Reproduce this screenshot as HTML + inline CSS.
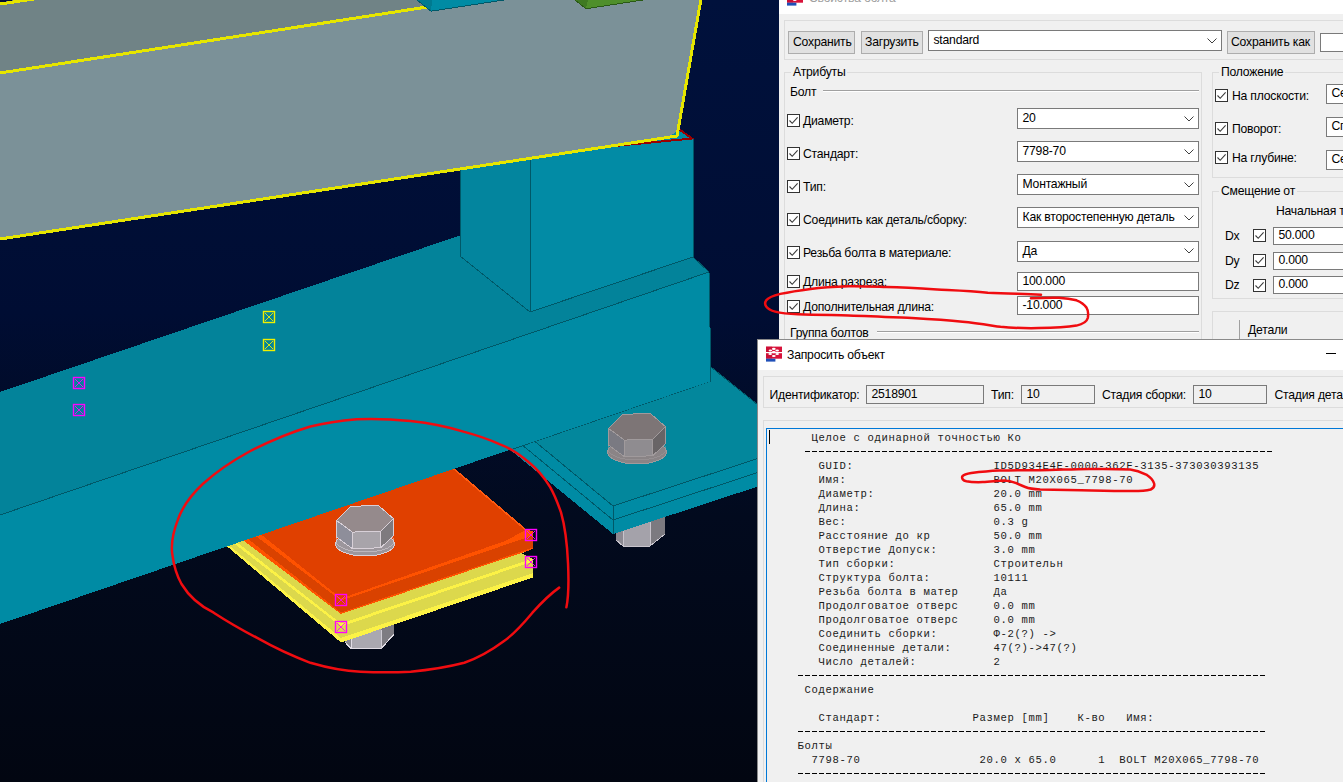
<!DOCTYPE html>
<html><head><meta charset="utf-8">
<style>
*{box-sizing:border-box}
html,body{margin:0;padding:0;width:1343px;height:782px;overflow:hidden;background:#000a26;font-family:"Liberation Sans",sans-serif;font-size:12.2px;letter-spacing:-0.22px;color:#000}
#scene{position:absolute;left:0;top:0}
.abs{position:absolute}
.txt{position:absolute;white-space:pre;line-height:14px}
.gb{position:absolute;border:1px solid #dcdcdc}
.btn{position:absolute;background:#e1e1e1;border:1px solid #adadad}
.cmb{position:absolute;background:#fff;border:1px solid #7a7a7a}
.ed{position:absolute;background:#fff;border:1px solid #7a7a7a}
.cb{position:absolute;width:13px;height:13px;border:1px solid #333;background:#fff}
#ann{position:absolute;left:0;top:0}
.mono{position:absolute;font-family:"Liberation Mono",monospace;font-size:10.6px;letter-spacing:0.64px;line-height:14px;white-space:pre;color:#1a1a1a}
</style></head><body>
<svg id="scene" width="1343" height="782" viewBox="0 0 1343 782" shape-rendering="crispEdges">
<defs><linearGradient id="bg" x1="0" y1="0" x2="0" y2="1">
<stop offset="0" stop-color="#00113c"/><stop offset="0.4" stop-color="#000d33"/><stop offset="0.66" stop-color="#020a1e"/><stop offset="1" stop-color="#020611"/>
</linearGradient></defs>
<rect width="1343" height="782" fill="url(#bg)"/>
<polygon points="345.0,615.0 351.0,615.0 351.0,648.5 345.0,642.0" fill="#8c8a92" />
<polygon points="351.0,615.0 381.0,615.0 381.0,648.5 351.0,648.5" fill="#aaa8b0" />
<polygon points="381.0,615.0 394.0,615.0 394.0,634.5 381.0,648.5" fill="#7e7c82" />
<polyline points="345.0,642.0 351.0,648.5 381.0,648.5 394.0,634.5" fill="none" stroke="#e0dce4" stroke-width="1.2" />
<polyline points="351.0,630.0 351.0,648.5" fill="none" stroke="#e0dce4" stroke-width="1" />
<polyline points="381.0,630.0 381.0,648.5" fill="none" stroke="#d0ccd4" stroke-width="1" />
<polygon points="224.2,544.0 341.0,642.5 533.0,577.5 533.0,531.0 526.0,530.0 448.2,464.0" fill="#fcf246" />
<polygon points="226.5,543.2 341.0,638.0 533.0,573.0 533.0,531.0 526.0,530.0 448.2,464.0" fill="#dcd84c" />
<polygon points="231.5,541.5 341.0,626.5 533.0,561.5 533.0,531.0 526.0,530.0 448.2,464.0" fill="#fcf246" />
<polygon points="234.6,540.5 341.0,623.5 533.0,558.5 533.0,531.0 526.0,530.0 448.2,464.0" fill="#dcd84c" />
<polygon points="240.7,538.4 341.0,614.0 533.0,549.0 533.0,531.0 526.0,530.0 448.2,464.0" fill="#ff5200" />
<polygon points="245.4,536.8 341.0,612.5 533.0,547.5 533.0,531.0 526.0,530.0 448.2,464.0" fill="#d94200" />
<polygon points="253.3,534.1 341.0,600.5 533.0,535.5 533.0,531.0 526.0,530.0 448.2,464.0" fill="#ff5200" />
<polygon points="258.5,532.4 341.0,598.5 505.0,541.0 526.0,530.0 448.2,464.0" fill="#e04000" />
<polyline points="526.0,530.0 453.4,468.4" fill="none" stroke="#ff5a10" stroke-width="1.6" />
<polygon points="522.0,553.5 534.0,548.0 534.0,559.5" fill="#020a1c" />
<polygon points="616.0,500.0 623.0,500.0 623.0,546.0 616.0,540.0" fill="#8c8a92" />
<polygon points="623.0,500.0 650.0,500.0 650.0,546.0 623.0,546.0" fill="#a4a2aa" />
<polygon points="650.0,500.0 665.0,500.0 665.0,534.0 650.0,546.0" fill="#7c7a80" />
<polyline points="616.0,540.0 623.0,546.0 650.0,546.0 665.0,534.0" fill="none" stroke="#c8c4cc" stroke-width="1" />
<polyline points="623.0,520.0 623.0,546.0" fill="none" stroke="#c8c4cc" stroke-width="1" />
<polyline points="650.0,520.0 650.0,546.0" fill="none" stroke="#c8c4cc" stroke-width="1" />
<polygon points="510.3,449.9 613.0,534.0 613.0,520.0 522.6,445.3" fill="#008ba4" />
<polygon points="522.6,445.3 613.0,520.0 613.0,506.0 535.0,441.5" fill="#008ba4" />
<polygon points="535.0,441.5 613.0,506.0 760.0,457.8 760.0,406.5 711.0,367.0 711.0,381.0" fill="#03879c" />
<polygon points="613.0,506.0 760.0,457.8 760.0,471.8 613.0,520.0" fill="#008ba4" />
<polygon points="613.0,520.0 760.0,471.8 760.0,485.8 613.0,534.0" fill="#008ba4" />
<polyline points="510.3,449.9 711.0,381.0" fill="none" stroke="#005868" stroke-width="1" />
<polyline points="522.6,445.3 613.0,520.0 760.0,471.8" fill="none" stroke="#005868" stroke-width="1" />
<polyline points="535.0,441.5 613.0,506.0 760.0,457.8" fill="none" stroke="#005868" stroke-width="1" />
<polyline points="613.0,506.0 613.0,534.0" fill="none" stroke="#005868" stroke-width="1" />
<polyline points="711.0,367.0 760.0,406.5" fill="none" stroke="#005868" stroke-width="1" />
<polygon points="0.0,392.0 614.0,183.0 709.0,272.0 0.0,515.0" fill="#03839a" />
<polygon points="0.0,515.0 709.0,272.0 711.0,381.0 0.0,624.0" fill="#008ba4" />
<polyline points="0.0,515.0 709.0,272.0" fill="none" stroke="#005868" stroke-width="1" />
<polyline points="693.0,257.0 709.0,272.0 711.0,381.0" fill="none" stroke="#005868" stroke-width="1" />
<polygon points="460.0,150.0 530.0,140.0 530.0,312.0 460.0,256.0" fill="#03859e" />
<polyline points="460.0,165.0 460.0,256.0" fill="none" stroke="#005868" stroke-width="1" />
<polygon points="530.0,140.0 679.4,120.0 679.4,129.5 693.0,138.5 693.0,257.0 530.0,312.0" fill="#028ba5" />
<polyline points="460.0,256.0 530.0,312.0 693.0,257.0" fill="none" stroke="#005868" stroke-width="1" />
<polyline points="530.0,150.0 530.0,312.0" fill="none" stroke="#005868" stroke-width="1" />
<polyline points="693.0,138.0 693.0,257.0" fill="none" stroke="#005868" stroke-width="1" />
<polygon points="0.0,0.0 480.0,0.0 427.0,7.0 0.0,73.0" fill="#708386" />
<polygon points="0.0,2.5 15.0,0.0 0.0,0.0" fill="#000c32" />
<polyline points="0.0,4.0 34.0,-1.0" fill="none" stroke="#e6e600" stroke-width="3" />
<polygon points="0.0,73.0 427.0,7.0 432.0,-1.0 701.0,-1.0 677.0,136.0 0.0,239.0" fill="#7b9198" />
<polygon points="679.4,130.0 691.6,138.5 660.0,142.0" fill="#008ba4" />
<polyline points="610.0,146.5 692.0,138.5 679.4,129.5" fill="none" stroke="#9a0000" stroke-width="2" />
<polyline points="0.0,73.0 427.0,7.0" fill="none" stroke="#e6e600" stroke-width="3" />
<polyline points="0.0,239.0 677.0,136.0 701.0,-1.0" fill="none" stroke="#e6e600" stroke-width="3" />
<polygon points="417.0,0.0 431.0,11.2 504.0,0.0" fill="#008ba4" />
<polygon points="417.0,0.0 431.0,11.2 432.0,0.0" fill="#007a90" />
<polyline points="417.0,0.0 431.0,11.2 504.0,0.0" fill="none" stroke="#005868" stroke-width="1" />
<polygon points="575.0,0.0 586.0,8.7 643.0,0.0" fill="#4f8f2b" />
<polygon points="575.0,0.0 586.0,8.7 588.0,0.0" fill="#3f7a22" />
<polyline points="575.0,0.0 586.0,8.7 643.0,0.0" fill="none" stroke="#2a5a15" stroke-width="1" />
<ellipse cx="637.0" cy="452.0" rx="29.5" ry="12.0" fill="#8a8486" stroke="#a09a9c" stroke-width="1"/>
<ellipse cx="637.0" cy="449.0" rx="29.0" ry="11.0" fill="none" stroke="#a09a9c" stroke-width="0.8" opacity="0.7"/>
<polygon points="608.6,428.5 624.3,440.1 624.3,456.7 608.6,445.0" fill="#7a7a82" />
<polygon points="624.3,440.1 652.9,439.2 652.9,455.8 624.3,456.7" fill="#8f8c90" />
<polygon points="652.9,439.2 665.5,426.7 665.5,443.3 652.9,455.8" fill="#686466" />
<polygon points="622.5,414.2 650.7,413.7 665.5,426.7 652.9,439.2 624.3,440.1 608.6,428.5" fill="#7d7576" stroke="#a09a9c" stroke-width="1"/>
<polyline points="608.6,428.5 608.6,445.0 624.3,456.7 652.9,455.8 665.5,443.3 665.5,426.7" fill="none" stroke="#a09a9c" stroke-width="1" />
<polyline points="624.3,440.1 624.3,456.7" fill="none" stroke="#a09a9c" stroke-width="1" />
<polyline points="652.9,439.2 652.9,455.8" fill="none" stroke="#a09a9c" stroke-width="1" />
<ellipse cx="365.0" cy="544.0" rx="29.5" ry="12.0" fill="#9c969c" stroke="#d8d0d8" stroke-width="1"/>
<ellipse cx="365.0" cy="541.0" rx="29.0" ry="11.0" fill="none" stroke="#d8d0d8" stroke-width="0.8" opacity="0.7"/>
<polygon points="336.6,520.5 352.3,532.1 352.3,548.7 336.6,537.0" fill="#8e8e9a" />
<polygon points="352.3,532.1 380.9,531.2 380.9,547.8 352.3,548.7" fill="#a8a4aa" />
<polygon points="380.9,531.2 393.5,518.7 393.5,535.3 380.9,547.8" fill="#7e7a7e" />
<polygon points="350.5,506.2 378.7,505.7 393.5,518.7 380.9,531.2 352.3,532.1 336.6,520.5" fill="#958a8c" stroke="#d8d0d8" stroke-width="1"/>
<polyline points="336.6,520.5 336.6,537.0 352.3,548.7 380.9,547.8 393.5,535.3 393.5,518.7" fill="none" stroke="#d8d0d8" stroke-width="1" />
<polyline points="352.3,532.1 352.3,548.7" fill="none" stroke="#d8d0d8" stroke-width="1" />
<polyline points="380.9,531.2 380.9,547.8" fill="none" stroke="#d8d0d8" stroke-width="1" />
<g stroke="#f0f000" fill="none" shape-rendering="auto"><rect x="263.5" y="311.5" width="11" height="11" stroke-width="1.4"/><path d="M265.0,313.0L273.0,321.0M273.0,313.0L265.0,321.0" stroke-width="0.9"/></g>
<g stroke="#f0f000" fill="none" shape-rendering="auto"><rect x="263.5" y="339.5" width="11" height="11" stroke-width="1.4"/><path d="M265.0,341.0L273.0,349.0M273.0,341.0L265.0,349.0" stroke-width="0.9"/></g>
<g stroke="#ff00ff" fill="none" shape-rendering="auto"><rect x="73.5" y="377.5" width="11" height="11" stroke-width="1.4"/><path d="M75.0,379.0L83.0,387.0M83.0,379.0L75.0,387.0" stroke-width="0.9"/></g>
<g stroke="#ff00ff" fill="none" shape-rendering="auto"><rect x="73.5" y="404.5" width="11" height="11" stroke-width="1.4"/><path d="M75.0,406.0L83.0,414.0M83.0,406.0L75.0,414.0" stroke-width="0.9"/></g>
<g stroke="#ff00ff" fill="none" shape-rendering="auto"><rect x="335.5" y="594.5" width="11" height="11" stroke-width="1.4"/><path d="M337.0,596.0L345.0,604.0M345.0,596.0L337.0,604.0" stroke-width="0.9"/></g>
<g stroke="#ff00ff" fill="none" shape-rendering="auto"><rect x="335.5" y="621.5" width="11" height="11" stroke-width="1.4"/><path d="M337.0,623.0L345.0,631.0M345.0,623.0L337.0,631.0" stroke-width="0.9"/></g>
<g stroke="#ff00ff" fill="none" shape-rendering="auto"><rect x="525.5" y="529.5" width="11" height="11" stroke-width="1.4"/><path d="M527.0,531.0L535.0,539.0M535.0,531.0L527.0,539.0" stroke-width="0.9"/></g>
<g stroke="#ff00ff" fill="none" shape-rendering="auto"><rect x="525.5" y="556.5" width="11" height="11" stroke-width="1.4"/><path d="M527.0,558.0L535.0,566.0M535.0,558.0L527.0,566.0" stroke-width="0.9"/></g>
</svg>
<div class="abs" style="left:779px;top:0px;width:600px;height:14px;background:#fff"></div><div class="abs" style="left:779px;top:14px;width:600px;height:325px;background:#f0f0f0"></div><svg class="abs" style="left:787px;top:-9.8px" width="17" height="17"><rect x="0" y="0.6" width="16" height="12.1" fill="#d8123a"/><rect x="0" y="0.6" width="6" height="12.1" fill="#c40e34" opacity="0.6"/><rect x="0" y="12.7" width="9.4" height="2.9" fill="#1f4fb8"/><g fill="#fff"><rect x="0" y="6.0" width="16" height="1.2"/><ellipse cx="7.8" cy="2.9" rx="1.9" ry="1.1"/><ellipse cx="4.4" cy="4.6" rx="1.8" ry="1"/><ellipse cx="11.2" cy="4.6" rx="1.8" ry="1"/><ellipse cx="7.8" cy="6.2" rx="2" ry="1.1"/><ellipse cx="4.2" cy="8" rx="1.8" ry="1"/><ellipse cx="11.2" cy="8" rx="1.8" ry="1"/><ellipse cx="7.8" cy="10" rx="1.9" ry="1.1"/></g></svg><div class="txt" style="left:809px;top:-8.6px;color:#a0a0a0">Свойства болта</div><div class="gb" style="left:784px;top:20px;width:600px;height:40px;"></div><div class="btn" style="left:788px;top:31px;width:67px;height:23px;"></div><div class="txt" style="left:793px;top:35.1px;">Сохранить</div><div class="btn" style="left:861px;top:31px;width:62px;height:23px;"></div><div class="txt" style="left:865px;top:35.1px;">Загрузить</div><div class="cmb" style="left:928px;top:30px;width:294px;height:21px;"></div><div class="txt" style="left:933.5px;top:33.1px;">standard</div><svg class="abs" style="left:1207px;top:37.5px" width="10" height="6"><path d="M0.5,0.5 L5,5 L9.5,0.5" fill="none" stroke="#404040" stroke-width="1"/></svg><div class="btn" style="left:1227px;top:31px;width:88px;height:23px;"></div><div class="txt" style="left:1231px;top:35.1px;">Сохранить как</div><div class="ed" style="left:1320px;top:33px;width:60px;height:18.5px;"></div><div class="gb" style="left:784px;top:72px;width:418px;height:300px;"></div><div class="txt" style="left:791px;top:65.1px;background:#f0f0f0;padding:0 2px">Атрибуты</div><div class="txt" style="left:790px;top:84.6px;">Болт</div><div class="abs" style="left:823px;top:90px;width:376px;height:1px;background:#a0a0a0"></div><div class="abs" style="left:823px;top:91px;width:376px;height:1px;background:#fff"></div><div class="cb" style="left:787px;top:114px"><svg width="11" height="11" style="position:absolute;left:0;top:0"><path d="M1.5,5.5 L4.2,8.3 L9.6,2.4" fill="none" stroke="#3a3a3a" stroke-width="1.1"/></svg></div><div class="txt" style="left:803px;top:113.6px;">Диаметр:</div><div class="cb" style="left:787px;top:147px"><svg width="11" height="11" style="position:absolute;left:0;top:0"><path d="M1.5,5.5 L4.2,8.3 L9.6,2.4" fill="none" stroke="#3a3a3a" stroke-width="1.1"/></svg></div><div class="txt" style="left:803px;top:146.6px;">Стандарт:</div><div class="cb" style="left:787px;top:180px"><svg width="11" height="11" style="position:absolute;left:0;top:0"><path d="M1.5,5.5 L4.2,8.3 L9.6,2.4" fill="none" stroke="#3a3a3a" stroke-width="1.1"/></svg></div><div class="txt" style="left:803px;top:179.6px;">Тип:</div><div class="cb" style="left:787px;top:213px"><svg width="11" height="11" style="position:absolute;left:0;top:0"><path d="M1.5,5.5 L4.2,8.3 L9.6,2.4" fill="none" stroke="#3a3a3a" stroke-width="1.1"/></svg></div><div class="txt" style="left:803px;top:212.6px;">Соединить как деталь/сборку:</div><div class="cb" style="left:787px;top:246px"><svg width="11" height="11" style="position:absolute;left:0;top:0"><path d="M1.5,5.5 L4.2,8.3 L9.6,2.4" fill="none" stroke="#3a3a3a" stroke-width="1.1"/></svg></div><div class="txt" style="left:803px;top:245.6px;">Резьба болта в материале:</div><div class="cb" style="left:787px;top:275px"><svg width="11" height="11" style="position:absolute;left:0;top:0"><path d="M1.5,5.5 L4.2,8.3 L9.6,2.4" fill="none" stroke="#3a3a3a" stroke-width="1.1"/></svg></div><div class="txt" style="left:803px;top:274.6px;">Длина разреза:</div><div class="cb" style="left:787px;top:300px"><svg width="11" height="11" style="position:absolute;left:0;top:0"><path d="M1.5,5.5 L4.2,8.3 L9.6,2.4" fill="none" stroke="#3a3a3a" stroke-width="1.1"/></svg></div><div class="txt" style="left:803px;top:299.6px;">Дополнительная длина:</div><div class="cmb" style="left:1017px;top:108px;width:182px;height:21px;"></div><div class="txt" style="left:1022.5px;top:111.1px;">20</div><svg class="abs" style="left:1184px;top:115.5px" width="10" height="6"><path d="M0.5,0.5 L5,5 L9.5,0.5" fill="none" stroke="#404040" stroke-width="1"/></svg><div class="cmb" style="left:1017px;top:141px;width:182px;height:21px;"></div><div class="txt" style="left:1022.5px;top:144.1px;">7798-70</div><svg class="abs" style="left:1184px;top:148.5px" width="10" height="6"><path d="M0.5,0.5 L5,5 L9.5,0.5" fill="none" stroke="#404040" stroke-width="1"/></svg><div class="cmb" style="left:1017px;top:174px;width:182px;height:21px;"></div><div class="txt" style="left:1022.5px;top:177.1px;">Монтажный</div><svg class="abs" style="left:1184px;top:181.5px" width="10" height="6"><path d="M0.5,0.5 L5,5 L9.5,0.5" fill="none" stroke="#404040" stroke-width="1"/></svg><div class="cmb" style="left:1017px;top:207px;width:182px;height:21px;"></div><div class="txt" style="left:1022.5px;top:210.1px;">Как второстепенную деталь</div><svg class="abs" style="left:1184px;top:214.5px" width="10" height="6"><path d="M0.5,0.5 L5,5 L9.5,0.5" fill="none" stroke="#404040" stroke-width="1"/></svg><div class="cmb" style="left:1017px;top:240.5px;width:182px;height:21px;"></div><div class="txt" style="left:1022.5px;top:243.6px;">Да</div><svg class="abs" style="left:1184px;top:248.0px" width="10" height="6"><path d="M0.5,0.5 L5,5 L9.5,0.5" fill="none" stroke="#404040" stroke-width="1"/></svg><div class="ed" style="left:1017px;top:272px;width:182px;height:19px;background:#fff"></div><div class="txt" style="left:1022.5px;top:274.1px;">100.000</div><div class="ed" style="left:1017px;top:296px;width:182px;height:19px;background:#fff"></div><div class="txt" style="left:1022.5px;top:298.1px;">-10.000</div><div class="txt" style="left:790px;top:325.6px;">Группа болтов</div><div class="abs" style="left:877px;top:331px;width:322px;height:1px;background:#a0a0a0"></div><div class="abs" style="left:877px;top:332px;width:322px;height:1px;background:#fff"></div><div class="gb" style="left:1212px;top:72px;width:200px;height:106px;"></div><div class="txt" style="left:1219px;top:65.1px;background:#f0f0f0;padding:0 2px">Положение</div><div class="cb" style="left:1215px;top:89px"><svg width="11" height="11" style="position:absolute;left:0;top:0"><path d="M1.5,5.5 L4.2,8.3 L9.6,2.4" fill="none" stroke="#3a3a3a" stroke-width="1.1"/></svg></div><div class="txt" style="left:1232px;top:88.6px;">На плоскости:</div><div class="ed" style="left:1326px;top:83.5px;width:60px;height:20px;background:#fff"></div><div class="txt" style="left:1331.5px;top:86.1px;">Се</div><div class="cb" style="left:1215px;top:122.4px"><svg width="11" height="11" style="position:absolute;left:0;top:0"><path d="M1.5,5.5 L4.2,8.3 L9.6,2.4" fill="none" stroke="#3a3a3a" stroke-width="1.1"/></svg></div><div class="txt" style="left:1232px;top:122.0px;">Поворот:</div><div class="ed" style="left:1326px;top:116.6px;width:60px;height:20px;background:#fff"></div><div class="txt" style="left:1331.5px;top:119.19999999999999px;">Сп</div><div class="cb" style="left:1215px;top:151.2px"><svg width="11" height="11" style="position:absolute;left:0;top:0"><path d="M1.5,5.5 L4.2,8.3 L9.6,2.4" fill="none" stroke="#3a3a3a" stroke-width="1.1"/></svg></div><div class="txt" style="left:1232px;top:150.79999999999998px;">На глубине:</div><div class="ed" style="left:1326px;top:149.6px;width:60px;height:20px;background:#fff"></div><div class="txt" style="left:1331.5px;top:152.2px;">Се</div><div class="gb" style="left:1212px;top:191px;width:200px;height:108px;"></div><div class="txt" style="left:1219px;top:184.1px;background:#f0f0f0;padding:0 2px">Смещение от</div><div class="txt" style="left:1276px;top:203.9px;">Начальная т</div><div class="txt" style="left:1225px;top:228.79999999999998px;">Dx</div><div class="cb" style="left:1253px;top:229.2px"><svg width="11" height="11" style="position:absolute;left:0;top:0"><path d="M1.5,5.5 L4.2,8.3 L9.6,2.4" fill="none" stroke="#3a3a3a" stroke-width="1.1"/></svg></div><div class="ed" style="left:1273px;top:226.7px;width:100px;height:18px;background:#fff"></div><div class="txt" style="left:1278.5px;top:228.29999999999998px;">50.000</div><div class="txt" style="left:1225px;top:253.6px;">Dy</div><div class="cb" style="left:1253px;top:254px"><svg width="11" height="11" style="position:absolute;left:0;top:0"><path d="M1.5,5.5 L4.2,8.3 L9.6,2.4" fill="none" stroke="#3a3a3a" stroke-width="1.1"/></svg></div><div class="ed" style="left:1273px;top:251.6px;width:100px;height:18px;background:#fff"></div><div class="txt" style="left:1278.5px;top:253.20000000000002px;">0.000</div><div class="txt" style="left:1225px;top:278.1px;">Dz</div><div class="cb" style="left:1253px;top:278.5px"><svg width="11" height="11" style="position:absolute;left:0;top:0"><path d="M1.5,5.5 L4.2,8.3 L9.6,2.4" fill="none" stroke="#3a3a3a" stroke-width="1.1"/></svg></div><div class="ed" style="left:1273px;top:275.6px;width:100px;height:18px;background:#fff"></div><div class="txt" style="left:1278.5px;top:277.20000000000005px;">0.000</div><div class="gb" style="left:1212px;top:311px;width:200px;height:60px;"></div><div class="abs" style="left:1239px;top:320px;width:1px;height:30px;background:#a0a0a0"></div><div class="txt" style="left:1248px;top:322.90000000000003px;">Детали</div>
<div class="abs" style="left:757px;top:339px;width:600px;height:1px;background:#8a8a8a"></div><div class="abs" style="left:757px;top:340px;width:1px;height:450px;background:#8a8a8a"></div><div class="abs" style="left:758px;top:340px;width:600px;height:30px;background:#fff"></div><div class="abs" style="left:758px;top:370px;width:600px;height:420px;background:#f0f0f0"></div><svg class="abs" style="left:766px;top:346px" width="17" height="17"><rect x="0" y="0.6" width="16" height="12.1" fill="#d8123a"/><rect x="0" y="0.6" width="6" height="12.1" fill="#c40e34" opacity="0.6"/><rect x="0" y="12.7" width="9.4" height="2.9" fill="#1f4fb8"/><g fill="#fff"><rect x="0" y="6.0" width="16" height="1.2"/><ellipse cx="7.8" cy="2.9" rx="1.9" ry="1.1"/><ellipse cx="4.4" cy="4.6" rx="1.8" ry="1"/><ellipse cx="11.2" cy="4.6" rx="1.8" ry="1"/><ellipse cx="7.8" cy="6.2" rx="2" ry="1.1"/><ellipse cx="4.2" cy="8" rx="1.8" ry="1"/><ellipse cx="11.2" cy="8" rx="1.8" ry="1"/><ellipse cx="7.8" cy="10" rx="1.9" ry="1.1"/></g></svg><div class="txt" style="left:787px;top:347.6px;">Запросить объект</div><svg class="abs" style="left:1326px;top:353px" width="10" height="2"><rect width="10" height="1" fill="#000"/></svg><div class="gb" style="left:763px;top:376px;width:620px;height:32px;"></div><div class="txt" style="left:769.5px;top:387.6px;">Идентификатор:</div><div class="ed" style="left:866px;top:385px;width:118px;height:19px;background:#f0f0f0"></div><div class="txt" style="left:871.5px;top:387.1px;">2518901</div><div class="txt" style="left:991px;top:387.6px;">Тип:</div><div class="ed" style="left:1021px;top:385px;width:74px;height:19px;background:#f0f0f0"></div><div class="txt" style="left:1026.5px;top:387.1px;">10</div><div class="txt" style="left:1102px;top:387.6px;">Стадия сборки:</div><div class="ed" style="left:1193px;top:385px;width:74px;height:19px;background:#f0f0f0"></div><div class="txt" style="left:1198.5px;top:387.1px;">10</div><div class="txt" style="left:1274.5px;top:387.6px;">Стадия детал</div><div class="gb" style="left:763px;top:420px;width:620px;height:400px;"></div><div class="abs" style="left:766px;top:428px;width:600px;height:400px;border:1px solid #0078d7;background:#f0f0f0"></div><div class="abs" style="left:769px;top:430px;width:1px;height:14px;background:#000"></div><div class="abs" style="left:804.8px;top:451px;width:469px;height:1px;background:repeating-linear-gradient(90deg,#000 0 5px,transparent 5px 7px)"></div><div class="abs" style="left:797.8px;top:675px;width:469px;height:1px;background:repeating-linear-gradient(90deg,#000 0 5px,transparent 5px 7px)"></div><div class="abs" style="left:797.8px;top:731px;width:469px;height:1px;background:repeating-linear-gradient(90deg,#000 0 5px,transparent 5px 7px)"></div><div class="abs" style="left:797.8px;top:773px;width:469px;height:1px;background:repeating-linear-gradient(90deg,#000 0 5px,transparent 5px 7px)"></div><div class="mono" style="left:769.5px;top:431px">      Целое с одинарной точностью Ко

       GUID:                    ID5D934E4E-0000-362F-3135-373030393135
       Имя:                     BOLT M20X065_7798-70
       Диаметр:                 20.0 mm
       Длина:                   65.0 mm
       Вес:                     0.3 g
       Расстояние до кр         50.0 mm
       Отверстие Допуск:        3.0 mm
       Тип сборки:              Строительн
       Структура болта:         10111
       Резьба болта в матер     Да
       Продолговатое отверс     0.0 mm
       Продолговатое отверс     0.0 mm
       Соединить сборки:        Ф-2(?) -&gt;
       Соединенные детали:      47(?)-&gt;47(?)
       Число деталей:           2

     Содержание

       Стандарт:             Размер [mm]    К-во   Имя:

    Болты
      7798-70                 20.0 x 65.0      1  BOLT M20X065_7798-70
</div>
<svg id="ann" width="1343" height="782" viewBox="0 0 1343 782"><g fill="none" stroke="#f00c10" stroke-width="2.5" stroke-linecap="round" stroke-linejoin="round">
<path d="M566.4,607.3 C570,590 569,540 561,512.4 C556,498 553,492 550.3,487.3 C542,474 536,468 528.8,462.3 C518,453 510,448 500,444.4 C488,439 476,435 464.3,431.9 C445,426 428,423 410.6,421.1 C390,419 372,418.5 356.9,419.3 C338,421 325,423 310.4,426.5 C285,434 268,442 249.5,451.5 C232,461 216,472 203,483.8 C190,496 182,508 177.9,519.6 C172,535 171,547 172.5,555.4 C174,567 177,576 181.5,584 C190,598 200,606 213.7,612.7 C228,622 242,630 256.7,637.7 C275,648 292,656 310.4,662.8 C328,668 344,671 360.5,671.7 C378,672.5 394,672.5 410.6,671.7 C430,670 448,667 464.3,662.8 C478,658 492,650 503.7,641.3 C514,634 523,624 532.4,612.7 C542,602 550,594 559.2,587.6"/>
<path d="M1041,294.7 C1020,294 1005,293 987.8,292.7 C970,291 955,290.5 937.2,289.6 C920,288.5 903,287.5 886.6,287.1 C870,286.5 860,286 848.6,286.3 C834,286.8 822,287.5 810.6,288.9 C798,290.5 789,292 780.3,293.9 C772,296 768,298 766.3,300.3 C764.5,303 765,305 766.3,306.6 C768,309 771,310.5 775.2,311.6 C782,313.5 790,314 798,314.2 C815,314.8 832,315 848.6,315.4 C870,316 890,317 911.9,318 C930,319 946,320 962.5,321.8 C976,323 988,325 1000.5,326.8 C1012,328 1025,328.3 1038.5,328.1 C1052,328 1066,327.5 1076.5,325.6 C1084,324 1087,321 1087.8,318 C1088.5,314 1088,310 1086.6,307.8 C1084,304 1081,302 1076.5,300.3 C1070,298.5 1065,298 1058.7,297.7 C1048,297.5 1040,297.8 1030.9,298.2"/>
<path d="M962.3,476.4 C964,474.5 967,473.8 971.3,473.1 C980,472 990,471 999.1,470.6 C1012,470.3 1026,470.2 1040.1,470.2 C1056,470 1072,469.2 1089.2,469 C1103,468.8 1117,468.8 1130.2,469.5 C1138,470.5 1142,472.5 1146.6,474.7 C1150,477 1153,480 1153.9,482.9 C1155,486 1154,488 1150.7,489.5 C1145,491 1138,491.2 1130.2,491.1 C1114,491 1097,490.6 1081,490.3 C1067,490 1053,489.8 1040.1,489.5 C1034,489.2 1029,488.5 1025.3,487 C1021,485.5 1018,484 1015.5,482.9 C1011,481 1007,480.5 1004,480.5 C997,480.8 990,481.8 982.8,482.1 C976,482.3 970,482 966.4,481.3 C963,480.5 961.5,478.5 962.3,476.4"/>
</g></svg>
</body></html>
